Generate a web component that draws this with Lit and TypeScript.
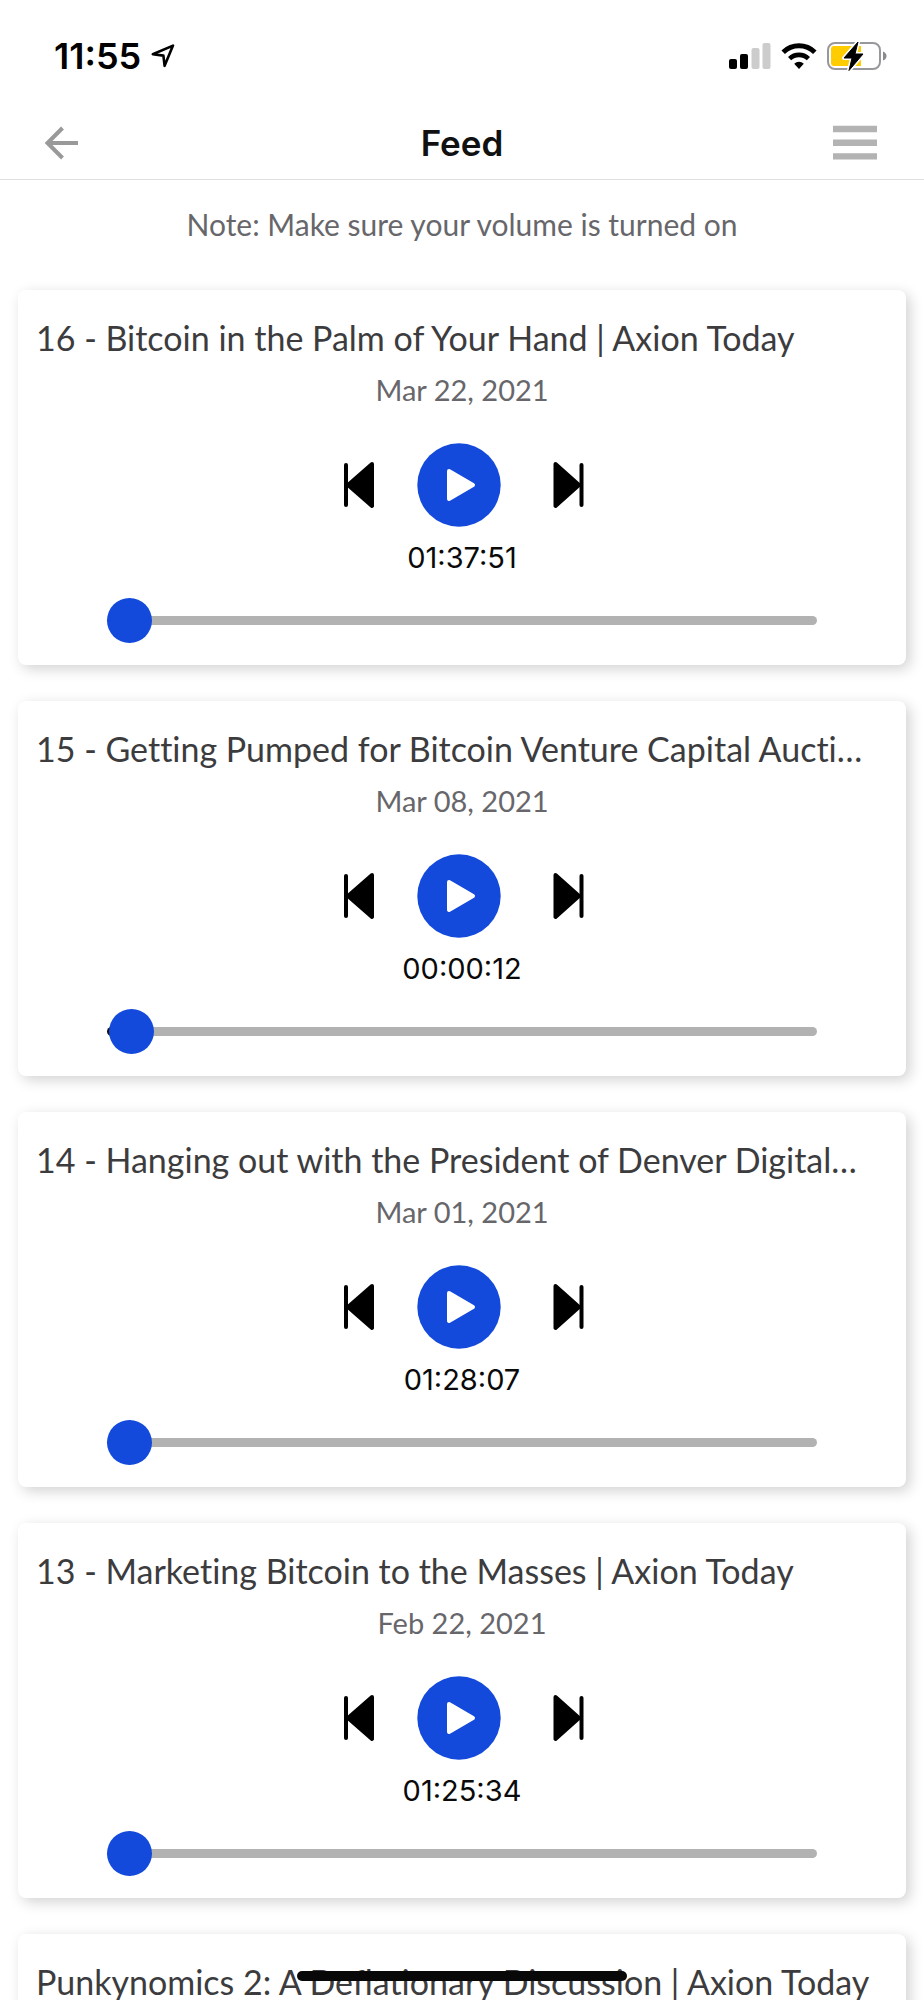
import { LitElement, html, css, svg } from "lit";
import { customElement, property } from "lit/decorators.js";

interface Episode {
  title: string;
  date: string;
  time: string;
  progress: number;
}

const EPISODES: Episode[] = [
  { title: "16 - Bitcoin in the Palm of Your Hand | Axion Today", date: "Mar 22, 2021", time: "01:37:51", progress: 0 },
  { title: "15 - Getting Pumped for Bitcoin Venture Capital Aucti…", date: "Mar 08, 2021", time: "00:00:12", progress: 0.3 },
  { title: "14 - Hanging out with the President of Denver Digital…", date: "Mar 01, 2021", time: "01:28:07", progress: 0 },
  { title: "13 - Marketing Bitcoin to the Masses | Axion Today", date: "Feb 22, 2021", time: "01:25:34", progress: 0 },
  { title: "Punkynomics 2: A Deflationary Discussion | Axion Today", date: "", time: "", progress: 0 },
];

@customElement("status-bar")
export class StatusBar extends LitElement {
  static styles = css`
    :host {
      display: flex;
      justify-content: space-between;
      align-items: center;
      height: 112px;
      padding: 0 37px 0 54px;
      box-sizing: border-box;
      color: #000;
    }
    .clock,
    .signals {
      display: flex;
      align-items: center;
    }
    .clock {
      gap: 10px;
      font: 600 36px/40px Inter, sans-serif;
    }
    .signals {
      gap: 10px;
    }
    svg {
      display: block;
    }
  `;

  render() {
    return html`
      <div class="clock">
        <span>11:55</span>
        <svg width="24" height="24" viewBox="0 0 24 24" aria-hidden="true">
          <path d="M1.800 10.200 22 1.600 13.600 21.800 12.400 11.600Z" fill="none" stroke="#000" stroke-width="2.600" stroke-linejoin="round" />
        </svg>
      </div>
      <div class="signals">
        <svg width="42" height="28" viewBox="0 0 42 28" aria-hidden="true">
          <rect x="0" y="17" width="8" height="10" rx="2" />
          <rect x="11" y="12" width="8" height="15" rx="2" />
          <rect x="22.500" y="6" width="8" height="21" rx="2" fill="#ccc" />
          <rect x="33.500" y="1" width="8" height="26" rx="2" fill="#ccc" />
        </svg>
        <svg width="36" height="28" viewBox="0 0 36 28" aria-hidden="true">
          <g fill="none" stroke="#000" stroke-width="5">
            <path d="M2.200 10.200a22.600 22.600 0 0 1 31.600 0" />
            <path d="M8.600 16.600a13.600 13.600 0 0 1 18.800 0" stroke-width="4.600" />
          </g>
          <path d="M13.200 21.700a7 7 0 0 1 9.600 0L18 27Z" />
        </svg>
        <svg width="60" height="30" viewBox="0 0 60 30" aria-hidden="true">
          <rect x="1" y="2" width="52" height="26" rx="7" fill="#fff" stroke="#98989c" stroke-width="2" />
          <path d="M56 10.500q3.500 1.500 3.500 4.500t-3.500 4.500Z" fill="#8a8a8e" />
          <path d="M7 5h27v20H7a3 3 0 0 1-3-3V8a3 3 0 0 1 3-3Z" fill="#fc0" />
          <path d="M31 1 17 17h8l-3 12.500L36 13h-8Z" stroke="#fff" stroke-width="4" stroke-linejoin="round" />
          <path d="M31 1 17 17h8l-3 12.500L36 13h-8Z" stroke="#000" stroke-width="1" stroke-linejoin="round" />
        </svg>
      </div>
    `;
  }
}

@customElement("nav-bar")
export class NavBar extends LitElement {
  static styles = css`
    :host {
      display: grid;
      grid-template-columns: 1fr auto 1fr;
      align-items: center;
      height: 68px;
      padding: 0 44px 6px;
      box-sizing: border-box;
      border-bottom: 1px solid #dedede;
    }
    h1 {
      margin: 0;
      font: 600 35px/40px Inter, sans-serif;
      color: #111;
    }
    button {
      padding: 0;
      border: 0;
      background: none;
      cursor: pointer;
    }
    .menu {
      justify-self: end;
    }
    .back {
      justify-self: start;
    }
    svg {
      display: block;
    }
  `;

  render() {
    return html`
      <button class="back" aria-label="Back">
        <svg width="36" height="36" viewBox="0 0 36 36">
          <path d="M34 18H4M18.500 3 3.500 18l15 15" fill="none" stroke="#999" stroke-width="4" />
        </svg>
      </button>
      <h1>Feed</h1>
      <button class="menu" aria-label="Menu">
        <svg width="50" height="36" viewBox="0 0 50 36">
          <path d="M3 4h44M3 17.700h44M3 31.400h44" stroke="#b3b3b3" stroke-width="6.400" />
        </svg>
      </button>
    `;
  }
}

@customElement("episode-card")
export class EpisodeCard extends LitElement {
  @property({ attribute: false }) episode!: Episode;

  static styles = css`
    :host {
      display: flex;
      flex-direction: column;
      align-items: center;
      padding: 26px 0 22px;
      border-radius: 8px;
      background: #fff;
      box-shadow: 4px 4px 14px rgba(0, 0, 0, 0.18);
    }
    h2,
    p {
      margin: 0;
      white-space: nowrap;
    }
    h2 {
      align-self: stretch;
      margin: 0 18px;
      overflow: hidden;
      text-overflow: ellipsis;
      font: 400 34px/44px Lato, sans-serif;
      font-variant-ligatures: none;
      color: #3c3c3e;
    }
    .date {
      min-height: 36px;
      margin-top: 12px;
      font: 400 29px/36px Lato, sans-serif;
      color: #67676b;
    }
    .controls {
      display: flex;
      align-items: center;
      gap: 20px;
      margin-top: 35px;
    }
    .controls button {
      padding: 0;
      border: 0;
      background: none;
      cursor: pointer;
    }
    .controls svg {
      display: block;
    }
    .time {
      min-height: 36px;
      margin-top: 13px;
      font: 400 29px/36px Inter, sans-serif;
      color: #0a0a0a;
    }
    .seek {
      appearance: none;
      width: 80%;
      height: 46px;
      margin: 21px 0 0;
      background: none;
      cursor: pointer;
    }
    .seek::-webkit-slider-runnable-track {
      height: 9px;
      border-radius: 5px;
      background: linear-gradient(to right, #111 var(--played), #b2b2b2 var(--played));
    }
    .seek::-webkit-slider-thumb {
      appearance: none;
      width: 45px;
      height: 45px;
      margin-top: -18px;
      border-radius: 50%;
      background: #134adb;
    }
  `;

  private skip(forward: boolean) {
    const shape = forward
      ? svg`<path d="M28.500 3 52 24 28.500 45Z" stroke="#000" stroke-width="4" stroke-linejoin="round" /><path d="M54.500 4v40" stroke="#000" stroke-width="4" stroke-linecap="round" />`
      : svg`<path d="M41 3 17 24 41 45Z" stroke="#000" stroke-width="4" stroke-linejoin="round" /><path d="M15 4v40" stroke="#000" stroke-width="4" stroke-linecap="round" />`;
    return html`
      <button aria-label=${forward ? "Next" : "Previous"}>
        <svg width="66" height="48" viewBox="0 0 66 48">${shape}</svg>
      </button>
    `;
  }

  render() {
    const { title, date, time, progress } = this.episode;
    return html`
      <h2>${title}</h2>
      <p class="date">${date}</p>
      <div class="controls">
        ${this.skip(false)}
        <button aria-label="Play">
          <svg width="90" height="84" viewBox="0 0 90 84">
            <circle cx="42" cy="42" r="41.700" fill="#134adb" />
            <path d="M32 28 56 42 32 56Z" fill="#fff" stroke="#fff" stroke-width="4" stroke-linejoin="round" />
          </svg>
        </button>
        ${this.skip(true)}
      </div>
      <p class="time">${time}</p>
      <input
        class="seek"
        type="range"
        min="0"
        max="100"
        step="0.1"
        aria-label="Seek in ${title}"
        style="--played: ${progress * 5}%"
        .value=${String(progress)}
      />
    `;
  }
}

@customElement("app-root")
export class AppRoot extends LitElement {
  static styles = css`
    :host {
      display: flex;
      flex-direction: column;
      height: 100vh;
      position: relative;
      overflow: hidden;
      background: #fff;
    }
    status-bar,
    nav-bar {
      flex: none;
    }
    main {
      flex: 1;
      min-height: 0;
      overflow-y: auto;
      scrollbar-width: none;
    }
    .note {
      margin: 0;
      padding: 26px 18px 48px;
      text-align: center;
      font: 400 30px/36px Lato, sans-serif;
      color: #67676b;
    }
    .feed {
      display: flex;
      flex-direction: column;
      gap: 36px;
      padding: 0 18px 36px;
    }
    .home {
      position: absolute;
      left: 50%;
      bottom: 19px;
      width: 330px;
      height: 10px;
      margin-left: -165px;
      border-radius: 5px;
      background: #080808;
    }
  `;

  render() {
    return html`
      <status-bar></status-bar>
      <nav-bar></nav-bar>
      <main>
        <p class="note">Note: Make sure your volume is turned on</p>
        <div class="feed">
          ${EPISODES.map((e) => html`<episode-card .episode=${e}></episode-card>`)}
        </div>
      </main>
      <div class="home"></div>
    `;
  }
}
